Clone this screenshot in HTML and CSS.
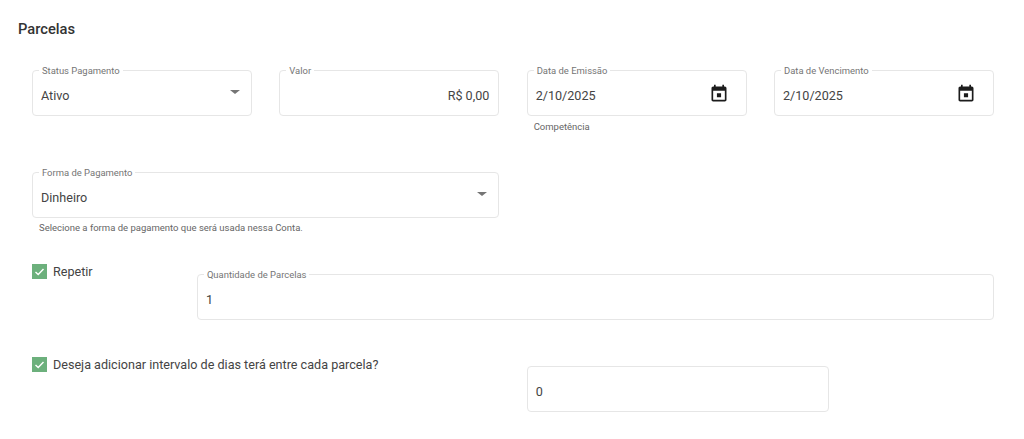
FILE: index.html
```html
<!DOCTYPE html>
<html lang="en">
<head>
 <meta charset="utf-8">
 <title>Parcelas</title>
 <link rel="stylesheet" href="styles.css">
</head>
<body>
 <div class="page">
 <h2 class="title">Parcelas</h2>

 <div class="row row-first">
 <div class="col-3">
 <div class="field">
 <span class="field-label">Status Pagamento</span>
 <span class="field-value">Ativo</span>
 <span class="arrow"></span>
 </div>
 </div>
 <div class="col-3">
 <div class="field">
 <span class="field-label">Valor</span>
 <span class="field-value value-right">R$ 0,00</span>
 </div>
 </div>
 <div class="col-3">
 <div class="field">
 <span class="field-label">Data de Emissão</span>
 <span class="field-value">2/10/2025</span>
 <svg class="calendar" viewBox="0 0 24 24"><path d="M19 3h-1V1h-2v2H8V1H6v2H5c-1.11 0-2 .9-2 2v14c0 1.1.89 2 2 2h14c1.1 0 2-.9 2-2V5c0-1.1-.9-2-2-2zm0 16H5V8h14v11zM9.500 11h5v5h-5z"/></svg>
 </div>
 <p class="hint">Competência</p>
 </div>
 <div class="col-3">
 <div class="field">
 <span class="field-label">Data de Vencimento</span>
 <span class="field-value">2/10/2025</span>
 <svg class="calendar" viewBox="0 0 24 24"><path d="M19 3h-1V1h-2v2H8V1H6v2H5c-1.11 0-2 .9-2 2v14c0 1.1.89 2 2 2h14c1.1 0 2-.9 2-2V5c0-1.1-.9-2-2-2zm0 16H5V8h14v11zM9.500 11h5v5h-5z"/></svg>
 </div>
 </div>
 </div>

 <div class="row row-payment">
 <div class="col-6">
 <div class="field">
 <span class="field-label">Forma de Pagamento</span>
 <span class="field-value">Dinheiro</span>
 <span class="arrow"></span>
 </div>
 <p class="hint hint-payment">Selecione a forma de pagamento que será usada nessa Conta.</p>
 </div>
 </div>

 <div class="row row-repeat">
 <div class="col-2">
 <label class="check">
 <span class="check-box"><svg viewBox="0 0 15 15"><path d="M3.500 8l2.700 2.600 5.300-5.600" fill="none" stroke="#fff" stroke-width="1.400"/></svg></span>
 Repetir
 </label>
 </div>
 <div class="col-10">
 <div class="field field-repeat">
 <span class="field-label">Quantidade de Parcelas</span>
 <span class="field-value">1</span>
 </div>
 </div>
 </div>

 <div class="row row-interval">
 <div class="col-6">
 <label class="check">
 <span class="check-box"><svg viewBox="0 0 15 15"><path d="M3.500 8l2.700 2.600 5.300-5.600" fill="none" stroke="#fff" stroke-width="1.400"/></svg></span>
 Deseja adicionar intervalo de dias terá entre cada parcela?
 </label>
 </div>
 <div class="col-4">
 <div class="field field-interval">
 <span class="field-value">0</span>
 </div>
 </div>
 </div>
 </div>
</body>
</html>
```

FILE: styles.css
```css
body {
 margin: 0;
 padding: 0;
 background: #fff;
 color: #444;
 font-family: Roboto, "Liberation Sans", sans-serif;
 overflow: hidden;
}

.page {
 padding: 21px 30px 0 18px;
}

.title {
 margin: 0;
 font-size: 14.700px;
 line-height: 17px;
 font-weight: 500;
 color: #333;
}

.row {
 display: grid;
 grid-template-columns: repeat(12, 1fr);
 column-gap: 27.300px;
 align-items: start;
 margin-left: 14px;
}

.row-first { margin-top: 32px; }
.row-payment { margin-top: 39px; }
.row-repeat { margin-top: 30px; }
.row-interval { margin-top: 37px; }

.col-2 { grid-column: span 2; }
.col-3 { grid-column: span 3; }
.col-4 { grid-column: span 4; }
.col-6 { grid-column: span 6; }
.col-10 { grid-column: span 10; }

.field {
 position: relative;
 display: flex;
 align-items: center;
 box-sizing: border-box;
 height: 46px;
 padding: 5px 9px 0 8px;
 border: 1px solid #e6e6e6;
 border-radius: 4px;
}

.field-repeat { margin-top: 10px; }
.field-interval { margin-top: 9px; }

.field-label {
 position: absolute;
 top: -6px;
 left: 6px;
 padding: 0 3px;
 background: #fff;
 font-size: 9.450px;
 line-height: 12px;
 color: #757575;
}

.field-value {
 flex: 1;
 font-size: 12.600px;
 line-height: 18px;
}

.value-right {
 text-align: right;
}

.arrow {
 width: 0;
 height: 0;
 margin: -7px 2px 0 0;
 border-left: 5px solid transparent;
 border-right: 5px solid transparent;
 border-top: 4px solid #757575;
}

.calendar {
 width: 20px;
 height: 20px;
 margin: -4px 8px 0 0;
 fill: #1c1c1c;
}

.hint {
 margin: 4px 0 0 7px;
 font-size: 9.500px;
 line-height: 13px;
 color: #666;
}

.hint-payment {
 margin-top: 3px;
}

.check {
 display: flex;
 align-items: center;
 gap: 6px;
 font-size: 12.600px;
 line-height: 15px;
 white-space: nowrap;
}

.check-box {
 display: block;
 width: 15px;
 height: 15px;
 flex: none;
 background: #6cb07c;
}

.check-box svg {
 display: block;
}
```
